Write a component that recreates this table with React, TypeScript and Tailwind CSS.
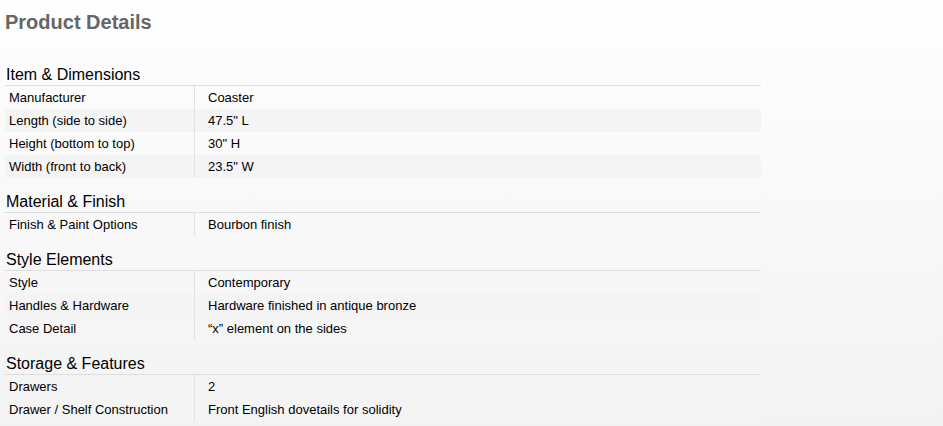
import React from "react";

type Section = { title: string; rows: [string, string][] };

const sections: Section[] = [
  {
    title: "Item & Dimensions",
    rows: [
      ["Manufacturer", "Coaster"],
      ["Length (side to side)", '47.5" L'],
      ["Height (bottom to top)", '30" H'],
      ["Width (front to back)", '23.5" W'],
    ],
  },
  {
    title: "Material & Finish",
    rows: [["Finish & Paint Options", "Bourbon finish"]],
  },
  {
    title: "Style Elements",
    rows: [
      ["Style", "Contemporary"],
      ["Handles & Hardware", "Hardware finished in antique bronze"],
      ["Case Detail", "\u201cx\u201d element on the sides"],
    ],
  },
  {
    title: "Storage & Features",
    rows: [
      ["Drawers", "2"],
      ["Drawer / Shelf Construction", "Front English dovetails for solidity"],
    ],
  },
];

export default function App() {
  return (
    <div
      className="min-h-screen w-full bg-linear-to-b from-[#fefefe] to-[#f3f3f3] text-black"
      style={{ fontFamily: '"Liberation Sans", Arial, Helvetica, sans-serif' }}
    >
      <div className="pl-[5px] pt-[9px]">
        <h1 className="text-[20px] leading-[26px] font-bold text-[#666666]">Product Details</h1>
        <div className="mt-[28px] flex w-[756px] flex-col gap-[12px]">
          {sections.map((s) => (
            <div key={s.title}>
              <div className="border-b border-[#dedede] pt-[2px] pl-[1px] text-[16px] leading-[20px]">
                {s.title}
              </div>
              {s.rows.map(([k, v], i) => (
                <div
                  key={k}
                  className={`flex h-[23px] text-[13px] leading-[23px] ${i % 2 === 1 ? "bg-[#f4f4f4]" : ""}`}
                >
                  <div className="w-[190px] border-r border-[#e2e2e2] pl-[4px]">{k}</div>
                  <div className="pl-[13px]">{v}</div>
                </div>
              ))}
            </div>
          ))}
        </div>
      </div>
    </div>
  );
}
